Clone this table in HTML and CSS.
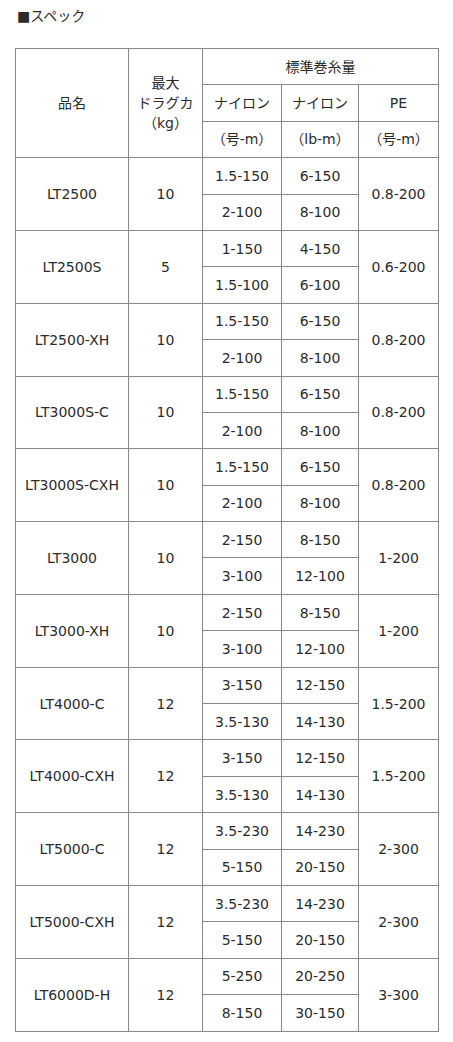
FILE: index.html
```html
<!DOCTYPE html>
<html lang="ja">
<head>
<meta charset="utf-8">
<link rel="stylesheet" href="styles.css">
</head>
<body>
<p class="title">■スペック</p>
<table class="spec">
<colgroup>
<col class="c1"><col class="c2"><col class="c3"><col class="c4"><col class="c5">
</colgroup>
<tr><td rowspan="3">品名</td><td rowspan="3" class="multi">最大<br>ドラグカ<br>（kg）</td><td colspan="3">標準巻糸量</td></tr>
<tr><td>ナイロン</td><td>ナイロン</td><td>PE</td></tr>
<tr><td>（号-m）</td><td>（lb-m）</td><td>（号-m）</td></tr>

<tr><td rowspan="2">LT2500</td><td rowspan="2">10</td><td>1.5-150</td><td>6-150</td><td rowspan="2">0.8-200</td></tr>
<tr><td>2-100</td><td>8-100</td></tr>
<tr><td rowspan="2">LT2500S</td><td rowspan="2">5</td><td>1-150</td><td>4-150</td><td rowspan="2">0.6-200</td></tr>
<tr><td>1.5-100</td><td>6-100</td></tr>
<tr><td rowspan="2">LT2500-XH</td><td rowspan="2">10</td><td>1.5-150</td><td>6-150</td><td rowspan="2">0.8-200</td></tr>
<tr><td>2-100</td><td>8-100</td></tr>
<tr><td rowspan="2">LT3000S-C</td><td rowspan="2">10</td><td>1.5-150</td><td>6-150</td><td rowspan="2">0.8-200</td></tr>
<tr><td>2-100</td><td>8-100</td></tr>
<tr><td rowspan="2">LT3000S-CXH</td><td rowspan="2">10</td><td>1.5-150</td><td>6-150</td><td rowspan="2">0.8-200</td></tr>
<tr><td>2-100</td><td>8-100</td></tr>
<tr><td rowspan="2">LT3000</td><td rowspan="2">10</td><td>2-150</td><td>8-150</td><td rowspan="2">1-200</td></tr>
<tr><td>3-100</td><td>12-100</td></tr>
<tr><td rowspan="2">LT3000-XH</td><td rowspan="2">10</td><td>2-150</td><td>8-150</td><td rowspan="2">1-200</td></tr>
<tr><td>3-100</td><td>12-100</td></tr>
<tr><td rowspan="2">LT4000-C</td><td rowspan="2">12</td><td>3-150</td><td>12-150</td><td rowspan="2">1.5-200</td></tr>
<tr><td>3.5-130</td><td>14-130</td></tr>
<tr><td rowspan="2">LT4000-CXH</td><td rowspan="2">12</td><td>3-150</td><td>12-150</td><td rowspan="2">1.5-200</td></tr>
<tr><td>3.5-130</td><td>14-130</td></tr>
<tr><td rowspan="2">LT5000-C</td><td rowspan="2">12</td><td>3.5-230</td><td>14-230</td><td rowspan="2">2-300</td></tr>
<tr><td>5-150</td><td>20-150</td></tr>
<tr><td rowspan="2">LT5000-CXH</td><td rowspan="2">12</td><td>3.5-230</td><td>14-230</td><td rowspan="2">2-300</td></tr>
<tr><td>5-150</td><td>20-150</td></tr>
<tr><td rowspan="2">LT6000D-H</td><td rowspan="2">12</td><td>5-250</td><td>20-250</td><td rowspan="2">3-300</td></tr>
<tr><td>8-150</td><td>30-150</td></tr>
</table>
</body>
</html>
```
FILE: styles.css
```css
html, body {
  margin: 0;
  padding: 0;
  background: #fff;
}
body {
  font-family: "DejaVu Sans", "Noto Sans CJK JP", sans-serif;
  font-size: 14px;
  color: #2b2b2b;
  padding: 0 15px;
}
.title {
  margin: 0;
  padding-top: 7px;
  height: 48px;
  box-sizing: border-box;
  line-height: 18px;
  font-size: 14px;
  padding-left: 2px;
}
.spec {
  border-collapse: collapse;
  table-layout: fixed;
  width: 423px;
}
.c1 { width: 113px; }
.c2 { width: 74px; }
.c3 { width: 79px; }
.c4 { width: 77px; }
.c5 { width: 80px; }
.spec td {
  border: 1px solid #8a8a8a;
  text-align: center;
  vertical-align: middle;
  padding: 0;
  height: 35.4px;
  line-height: 18px;
  white-space: nowrap;
}
.spec td.multi {
  line-height: 20px;
}
```
